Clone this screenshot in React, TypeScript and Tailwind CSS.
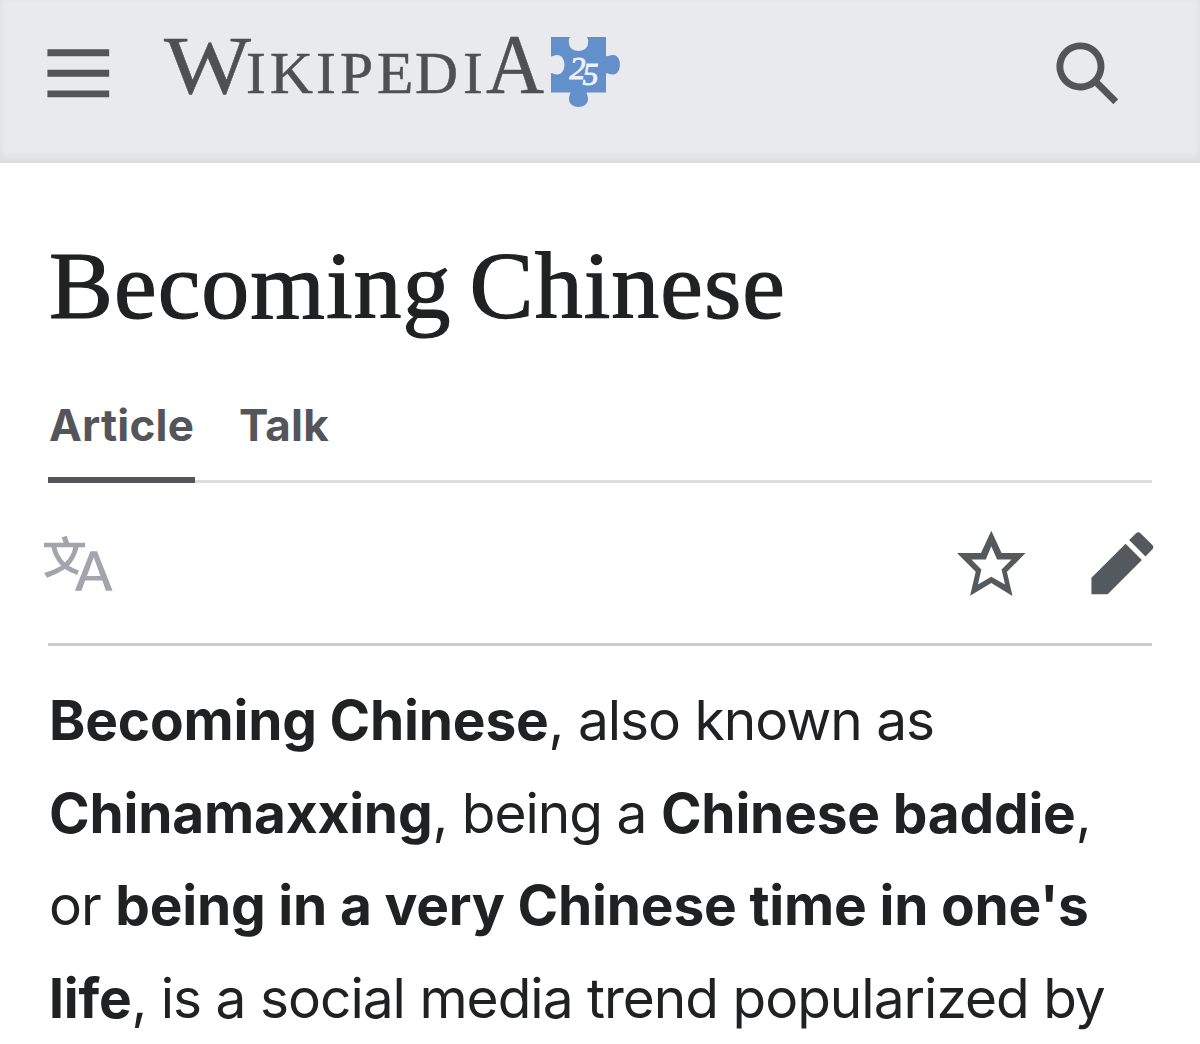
import type { ReactNode } from 'react'

const ICONS = {
  menu: 'M1 3v2h18V3zm0 8h18V9H1zm0 6h18v-2H1z',
  search: 'M12.2 13.6a7 7 0 1 1 1.4-1.4l5.4 5.4-1.4 1.4zM3 8a5 5 0 1 0 10 0A5 5 0 0 0 3 8',
  star: 'M20 7h-7L10 .5 7 7H0l5.46 5.47-1.64 7 6.18-3.7 6.18 3.73-1.63-7zm-10 6.9-3.9 2.3 1-4.4-2.9-2.9h4.2L10 5l1.7 3.9h4.2l-2.9 2.9 1 4.4z',
  edit: 'm16.77 8 1.94-2a1 1 0 0 0 0-1.41l-3.34-3.3a1 1 0 0 0-1.41 0L12 3.23zM1 14.25V19h4.75l9.96-9.96-4.75-4.75z',
  language:
    'M20 18h-1.95L17 15h-5l-1.1 3H9l4.55-11.5h1.9zm-3.53-4.31L14.5 8.26l-1.96 5.43zM10.17 12.11a13.4 13.4 0 0 1-2.91-1.41 11.46 11.46 0 0 0 2.81-5.37H12V4H7.31a4 4 0 0 0-.2-.56C6.87 2.79 6.6 2 6.6 2l-1.47.5s.4.89.6 1.5H0v1.33h2.15A11.23 11.23 0 0 0 5 10.7a17.2 17.2 0 0 1-5 2.1q.56.82.87 1.38a23.3 23.3 0 0 0 5.22-2.51 15.6 15.6 0 0 0 3.56 1.77zM3.63 5.33h4.91a8.1 8.1 0 0 1-2.45 4.45 9.1 9.1 0 0 1-2.46-4.45',
}

function Icon({ name, className }: { name: keyof typeof ICONS; className?: string }) {
  return (
    <svg viewBox="0 0 20 20" fill="currentColor" className={`size-[68.6px] shrink-0 ${className ?? ''}`}>
      <path fillRule="evenodd" d={ICONS[name]} />
    </svg>
  )
}

function Wordmark() {
  return (
    <svg viewBox="0 -20 464 110" className="h-[110px] w-[464px] font-['Liberation_Serif',serif]" fill="#4f5054">
      <g stroke="#4f5054" strokeWidth="0.5">
        <text x="4" y="62.500" fontSize="83" textLength="87" lengthAdjust="spacingAndGlyphs">W</text>
        <text x="86 110 156 180 217 255 303" y="62.700" fontSize="59.500">IKIPEDI</text>
        <text x="326" y="62.700" fontSize="84" textLength="58" lengthAdjust="spacingAndGlyphs">A</text>
      </g>
      {/* anniversary puzzle piece */}
      <path
        fill="#638fcb"
        d="M391 7H410.500C408 9 409 11 409 13C409 23.500 428 23.500 428 13C428 11 429 9 426.500 7H446V26C448 27 449 25 453 25C462.300 25 462.300 44.500 453 44.500C449 44.500 448 42.500 446 43.500V62.500H426.500C427 65 428 66 428 69C428 79.500 409 79.500 409 69C409 66 410 65 410.500 62.500H391V43C393 43 394 44.500 397 44.500C407 44.500 407 25 397 25C394 25 393 26.500 391 26.500Z"
      />
      <text
        x="409.500 422.500"
        y="49.300 55"
        fontSize="32"
        fontStyle="italic"
        fill="#eef2f8"
        stroke="#eef2f8"
        strokeWidth="0.9"
      >
        25
      </text>
    </svg>
  )
}

function Line({ children }: { children: ReactNode }) {
  return <span className="block whitespace-pre">{children}</span>
}

function Term({ children }: { children: ReactNode }) {
  return <b className="font-bold tracking-[-0.2px]">{children}</b>
}

export default function App() {
  return (
    <div className="h-[1044px] w-[1200px] overflow-hidden bg-white font-[Inter,sans-serif] text-[#202122]">
      <header className="flex h-[163px] items-start border-b border-[#d9dade] bg-[#e9eaee] pl-[43.5px] pr-[78px] shadow-[inset_0_-4px_8px_rgba(0,0,0,0.06)]">
        <Icon name="menu" className="mt-[38.6px] text-[#54555a]" />
        <div className="ml-[48px] mt-[10px]">
          <Wordmark />
        </div>
        <Icon name="search" className="ml-auto mt-[38.6px] text-[#54555a]" />
      </header>

      <main className="px-12">
        <h1 className="whitespace-nowrap pl-px pt-[69px] font-['Liberation_Serif',serif] text-[96px] leading-[108px] tracking-[1px] [word-spacing:-7px] [-webkit-text-stroke:1.2px_#202122]">
          Becoming Chinese
        </h1>

        <nav className="mt-[45px] flex h-[98px] items-end gap-11 border-b-3 border-[#dadce2] text-[44px] font-bold leading-[54px] tracking-[0.2px] text-[#54555a]">
          <a className="-mb-[3px] h-[85px] w-[147px] whitespace-nowrap border-b-6 border-[#54555a] pl-px">Article</a>
          <a className="-mb-[3px] h-[85px]">Talk</a>
        </nav>

        <div className="-ml-1 -mr-[5px] flex h-[160px] items-start">
          <Icon name="language" className="mt-[46px] text-[#a2a5ad]" />
          <Icon name="star" className="ml-auto mt-[46px] text-[#54595d]" />
          <Icon name="edit" className="ml-[62.5px] mt-[46px] text-[#54595d]" />
        </div>
        <hr className="border-t-3 border-[#c8cacf]" />

        <p className="mt-[28px] pl-px text-[55px] leading-[92.5px] tracking-[-1px]">
          <Line>
            <Term>Becoming Chinese</Term>, also known as
          </Line>
          <Line>
            <Term>Chinamaxxing</Term>, being a <Term>Chinese baddie</Term>,
          </Line>
          <Line>
            or <Term>being in a very Chinese time in one's</Term>
          </Line>
          <Line>
            <Term>life</Term>, is a social media trend popularized by
          </Line>
        </p>
      </main>
    </div>
  )
}
